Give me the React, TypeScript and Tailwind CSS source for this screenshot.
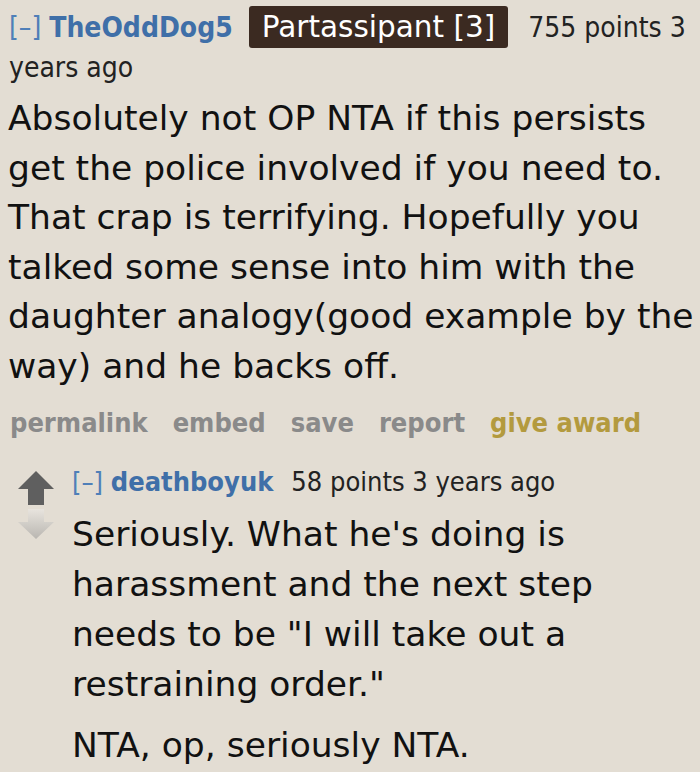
import React from 'react';

const body = "font-['DejaVu_Sans',Verdana,sans-serif]";
const meta = "font-['DejaVu_Sans_Condensed','DejaVu_Sans',Tahoma,sans-serif]";

const Arrows = () => (
  <div className="flex flex-col items-center w-[40px] shrink-0 pt-[8px]">
    <svg width="38" height="36" viewBox="0 0 38 36">
      <path d="M19 1 L37 19 L27 19 L27 35 L11 35 L11 19 L1 19 Z" fill="#5f5f5f" />
    </svg>
    <svg width="38" height="32" viewBox="0 0 38 32" className="mt-[2px]">
      <defs>
        <linearGradient id="dn" x1="0" y1="0" x2="0" y2="1">
          <stop offset="0" stopColor="#e8e4de" />
          <stop offset="1" stopColor="#b9b6b1" />
        </linearGradient>
      </defs>
      <path d="M11 1 L27 1 L27 14 L37 14 L19 31 L1 14 L11 14 Z" fill="url(#dn)" />
    </svg>
  </div>
);

export default function App() {
  return (
    <div className="w-[700px] h-[772px] bg-[#e3ddd3] overflow-hidden text-[#1a1a1a]">
      <div className="pl-[8px] pt-[6px]">
        <p className={`${meta} text-[28px] leading-[40px] ml-[1px] pr-[6px]`}>
          <span className="text-[#4f7fb8]">[–] </span>
          <span className="text-[#3f6fa8] font-bold">TheOddDog5</span>
          <span className={`${body} inline-block bg-[#3b2a21] text-white rounded-[3px] px-[13px] ml-[16px] mr-[20px] leading-[42px] text-[29.5px]`}>
            Partassipant [3]
          </span>
          <span className="text-[#222]">755 points 3 years ago</span>
        </p>
        <p className={`${body} text-[34.5px] leading-[49.5px] mt-[6px] text-[#111]`}>
          Absolutely not OP NTA if this persists get the police involved if you need to. That crap is terrifying. Hopefully you talked some sense into him with the daughter analogy(good example by the way) and he backs off.
        </p>
        <div className={`${meta} flex gap-[25px] text-[27px] font-bold text-[#8a8a8a] mt-[12px] ml-[2px]`}>
          <span>permalink</span>
          <span>embed</span>
          <span>save</span>
          <span>report</span>
          <span className="text-[#b39a3e]">give award</span>
        </div>
      </div>
      <div className="flex pl-[16px] mt-[18px]">
        <Arrows />
        <div className="ml-[16px]">
          <p className={`${meta} text-[27px] leading-[40px]`}>
            <span className="text-[#4f7fb8]">[–] </span>
            <span className="text-[#3f6fa8] font-bold">deathboyuk</span>
            <span className="text-[#222] ml-[18px]">58 points 3 years ago</span>
          </p>
          <p className={`${body} text-[34.5px] leading-[50px] mt-[7px] text-[#111]`}>
            Seriously. What he's doing is harassment and the next step needs to be "I will take out a restraining order."
          </p>
          <p className={`${body} text-[34.5px] leading-[50px] mt-[11px] text-[#111]`}>
            NTA, op, seriously NTA.
          </p>
        </div>
      </div>
    </div>
  );
}
